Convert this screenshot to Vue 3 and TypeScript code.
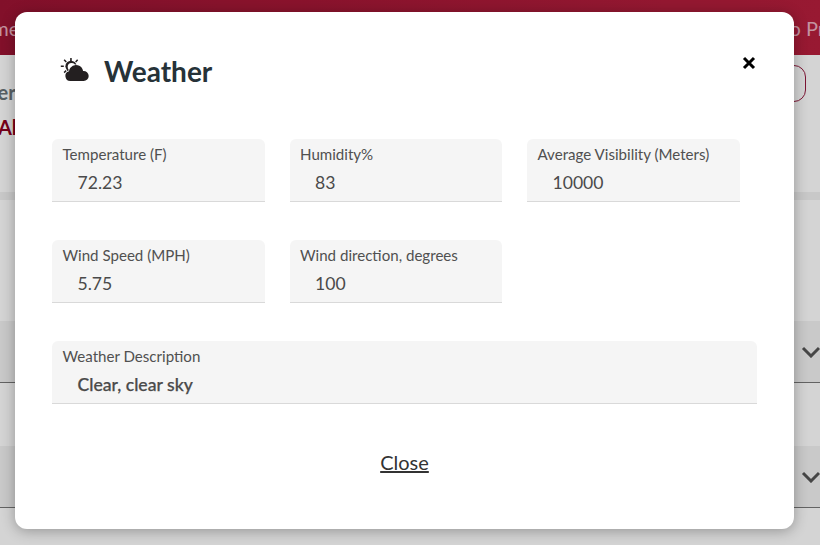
<script setup lang="ts">
interface Field {
  label: string;
  value: string;
  wide?: boolean;
  strong?: boolean;
}

const rows: Field[][] = [
  [
    { label: 'Temperature (F)', value: '72.23' },
    { label: 'Humidity%', value: '83' },
    { label: 'Average Visibility (Meters)', value: '10000' },
  ],
  [
    { label: 'Wind Speed (MPH)', value: '5.75' },
    { label: 'Wind direction, degrees', value: '100' },
  ],
  [{ label: 'Weather Description', value: 'Clear, clear sky', wide: true, strong: true }],
];
</script>

<template>
  <div class="page">
    <header class="topbar">
      <span class="topbar-text">Home</span>
      <span class="topbar-text">Go Pro</span>
    </header>
    <div class="toolbar">
      <div class="toolbar-left">
        <span class="crumb">Order</span>
        <span class="all">All</span>
      </div>
      <button class="outline" type="button"></button>
    </div>
    <div class="sections">
      <div class="section">
        <svg class="chevron" width="20" height="12" viewBox="0 0 20 12"><path d="M2 2l8 8 8-8" /></svg>
      </div>
      <div class="section">
        <svg class="chevron" width="20" height="12" viewBox="0 0 20 12"><path d="M2 2l8 8 8-8" /></svg>
      </div>
    </div>

    <div class="backdrop">
      <div class="modal" role="dialog" aria-modal="true" aria-label="Weather">
        <div class="modal-head">
          <h2 class="title">
            <svg class="weather-icon" width="30" height="24" viewBox="0 0 30 24" fill="#231f20">
              <path d="M10.2 0h1.5l.1 3h-1.7zM3.6 2.3l1.1-1 2.1 2.1-1.1 1.1zM18.2 2.3l-1.1-1-2 2.1 1.1 1.1zM.8 7.4h3v1.6h-3zM5.7 12.1l1.1 1.1-2.1 2-1.1-1.1z" />
              <circle cx="11" cy="8.3" r="5.6" />
              <circle cx="11.6" cy="8.8" r="3.9" fill="#fff" />
              <path
                d="M10.6 23a5 5 0 0 1-1.6-9.8 8 8 0 0 1 1.4-3.4 7.2 7.2 0 0 1 12.7 3.3 5.1 5.1 0 0 1 5.6 5 5 5 0 0 1-5 4.9z"
                stroke="#fff"
                stroke-width="1.3"
                paint-order="stroke"
              />
            </svg>
            <span>Weather</span>
          </h2>
          <button class="close-x" type="button" aria-label="Close">
            <svg width="14" height="14" viewBox="0 0 14 14"><path d="M2 2l10 10M12 2L2 12" /></svg>
          </button>
        </div>

        <div class="fields">
          <div v-for="(row, i) in rows" :key="i" class="field-row">
            <div v-for="field in row" :key="field.label" class="field" :class="{ wide: field.wide }">
              <label class="field-label">{{ field.label }}</label>
              <div class="field-value" :class="{ strong: field.strong }">{{ field.value }}</div>
            </div>
          </div>
        </div>

        <div class="modal-foot">
          <a class="close-link" href="#" @click.prevent>Close</a>
        </div>
      </div>
    </div>
  </div>
</template>

<style>
html,
body {
  margin: 0;
  overflow: hidden;
}
</style>

<style scoped>
.page {
  position: relative;
  width: 820px;
  height: 545px;
  overflow: hidden;
  background: #fff;
  font-family: Lato, 'Open Sans', sans-serif;
}
.topbar {
  display: flex;
  justify-content: space-between;
  align-items: center;
  height: 55px;
  background: linear-gradient(90deg, #9d1433, #b71f3d);
  overflow: hidden;
}
.topbar-text {
  font-size: 20px;
  color: #ebb0c0;
  white-space: nowrap;
}
.topbar-text:first-child {
  margin-left: -34px;
}
.topbar-text:last-child {
  margin-right: -16px;
}
.toolbar {
  display: flex;
  justify-content: space-between;
  height: 137px;
  box-sizing: border-box;
  padding: 10px 14px 0 0;
}
.toolbar-left {
  display: flex;
  flex-direction: column;
  gap: 11px;
  margin-left: -37px;
  margin-top: 15px;
}
.crumb {
  font-size: 20px;
  line-height: 24px;
  font-weight: 700;
  color: #6a7479;
}
.all {
  margin-left: 35px;
  font-size: 20px;
  line-height: 24px;
  font-weight: 700;
  color: #900020;
}
.outline {
  width: 60px;
  height: 37px;
  background: transparent;
  border: 1px solid #971a3f;
  border-radius: 12px;
}
.sections {
  padding-top: 121px;
  display: flex;
  flex-direction: column;
  gap: 63px;
  border-top: 8px solid #f1f1f1;
}
.section {
  display: flex;
  align-items: center;
  justify-content: flex-end;
  height: 61px;
  background: #f2f2f2;
  border-bottom: 1px solid #777;
}
.chevron {
  margin-right: -1px;
  fill: none;
  stroke: #555;
  stroke-width: 3;
}
.backdrop {
  position: absolute;
  inset: 0;
  display: flex;
  align-items: flex-start;
  padding: 12px 0 0 15px;
  background: rgba(0, 0, 0, 0.17);
}
.modal {
  display: flex;
  flex-direction: column;
  box-sizing: border-box;
  width: 779px;
  height: 517px;
  padding: 0 37px;
  background: #fff;
  border-radius: 12px;
  box-shadow: 0 2px 14px rgba(0, 0, 0, 0.3);
}
.modal-head {
  display: flex;
  justify-content: space-between;
  height: 127px;
}
.title {
  display: flex;
  align-items: center;
  gap: 14px;
  height: 36px;
  margin: 41px 0 0 8px;
  font-size: 28px;
  font-weight: 700;
  color: #263238;
}
.weather-icon {
  display: block;
  margin-top: -2px;
}
.close-x {
  align-self: flex-start;
  margin: 44px 1px 0 0;
  padding: 0;
  border: 0;
  background: transparent;
  line-height: 0;
}
.close-x path {
  fill: none;
  stroke: #000;
  stroke-width: 3;
}
.fields {
  display: flex;
  flex-direction: column;
  gap: 38.5px;
}
.field-row {
  display: flex;
  gap: 25px;
}
.field {
  box-sizing: border-box;
  width: 212.5px;
  height: 62.5px;
  padding: 6px 10.5px 0;
  background: #f5f5f5;
  border-bottom: 1px solid #d9d9d9;
  border-radius: 6px 6px 0 0;
}
.field.wide {
  width: 705px;
}
.field-label {
  display: block;
  font-size: 15.1px;
  line-height: 18px;
  color: #505050;
}
.field-value {
  margin-top: 9px;
  padding-left: 15px;
  font-size: 17.6px;
  line-height: 22px;
  color: #4a4a4a;
}
.field-value.strong {
  font-weight: 500;
  -webkit-text-stroke: 0.25px #4a4a4a;
}
.modal-foot {
  display: flex;
  justify-content: center;
  margin-top: 46px;
}
.close-link {
  font-size: 20px;
  line-height: 24px;
  color: #333;
  text-decoration: underline;
}
</style>
